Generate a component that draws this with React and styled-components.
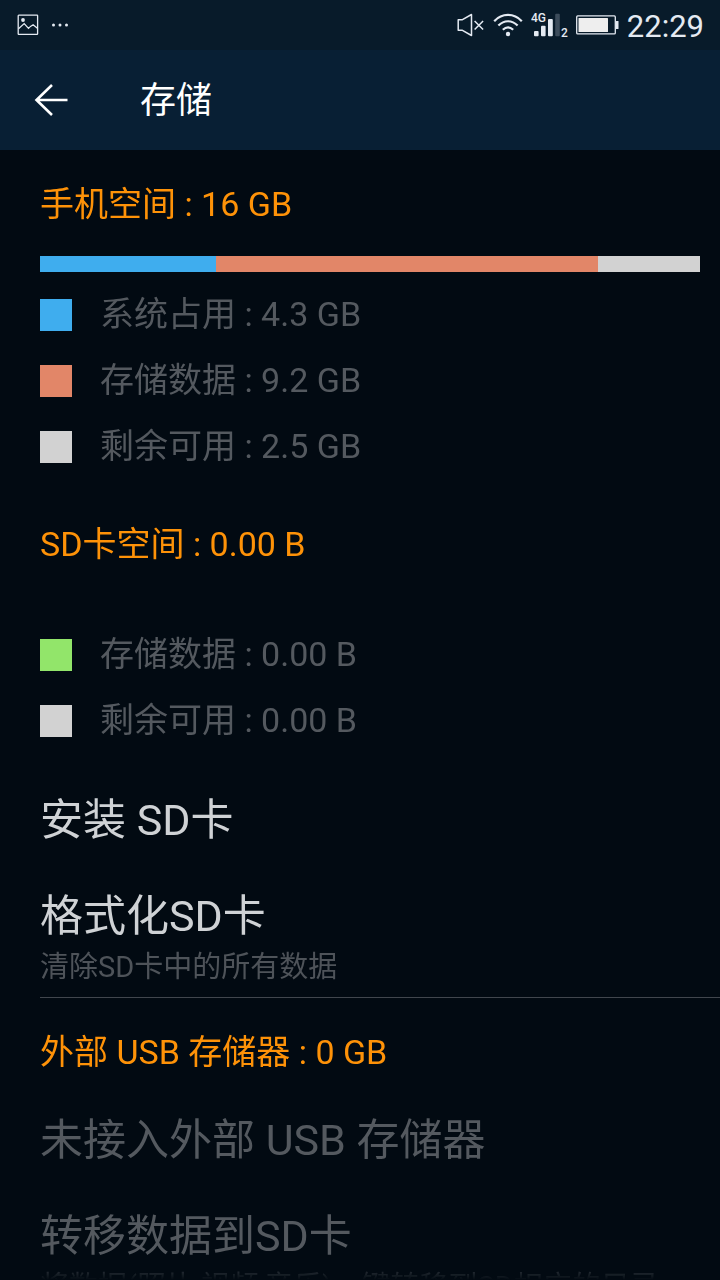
import React from 'react';
import styled, { createGlobalStyle } from 'styled-components';

const GlobalStyle = createGlobalStyle`
  * { box-sizing: border-box; }
  body {
    margin: 0;
    background: #020a12;
    font-family: Roboto, "Noto Sans CJK SC", sans-serif;
  }
`;

const Screen = styled.div`
  display: flex;
  flex-direction: column;
  height: 100vh;
  background: #020a12;
`;

const StatusBar = styled.div`
  flex: none;
  display: flex;
  align-items: center;
  justify-content: space-between;
  height: 50px;
  padding: 0 16px 0 17px;
  background: #081b2a;
  color: #e4eaf2;
`;

const StatusGroup = styled.div`
  display: flex;
  align-items: center;
  gap: ${(p) => p.$gap}px;
`;

const Clock = styled.time`
  font-size: 31px;
  line-height: 48px;
  padding-top: 4px;
`;

const AppBar = styled.header`
  flex: none;
  display: flex;
  align-items: center;
  gap: 72px;
  height: 100px;
  padding: 0 34px;
  background: #081f34;
`;

const BackButton = styled.button`
  display: flex;
  padding: 0;
  border: 0;
  background: none;
  color: #fff;
  cursor: pointer;
`;

const Title = styled.h1`
  margin: 0;
  padding-top: 2px;
  font-size: 36px;
  line-height: 44px;
  font-weight: 400;
  color: #fff;
`;

const Content = styled.main`
  flex: 1;
  min-height: 0;
  overflow-y: auto;
  scrollbar-width: none;
  mask-image: linear-gradient(to top, transparent, #000 20px);
`;

const Section = styled.section`
  padding: 34px 0 10px 40px;
`;

const SectionTitle = styled.h2`
  margin: 0;
  font-size: 34px;
  line-height: 40px;
  font-weight: 400;
  color: #fe9208;
`;

const UsageBar = styled.div`
  display: flex;
  height: 16px;
  margin: 32px 20px 10px 0;
`;

const UsagePart = styled.div`
  background: ${(p) => p.$color};
`;

const Legend = styled.ul`
  margin: 0;
  padding: 0;
  list-style: none;
`;

const LegendRow = styled.li`
  display: flex;
  align-items: center;
  gap: 28px;
  height: 66px;
  font-size: 34px;
  line-height: 40px;
  color: #54595f;
`;

const Swatch = styled.span`
  width: 32px;
  height: 32px;
  background: ${(p) => p.$color};
`;

const LegendText = styled.span`
  padding-bottom: 2px;
`;

const ActionList = styled.div`
  display: flex;
  flex-direction: column;
  padding-top: ${(p) => p.$top}px;
`;

const Action = styled.button`
  width: 100%;
  padding: 22px 0;
  border: 0;
  background: none;
  text-align: left;
  font-family: inherit;
  font-size: 43px;
  line-height: 52px;
  color: #cfd2d5;
  cursor: pointer;

  &:disabled {
    color: #54595f;
    cursor: default;
  }
`;

const ActionNote = styled.span`
  display: block;
  margin: 7px 0 -10px;
  font-size: 29px;
  line-height: 36px;
  color: #4e5359;
  white-space: nowrap;
`;

const Divider = styled.hr`
  height: 1px;
  margin: 0 0 0 40px;
  border: 0;
  background: #41464d;
`;

const Indented = styled.div`
  margin-top: -10px;
  padding-left: 40px;
`;

const BLUE = '#3fadee';
const CORAL = '#e28668';
const GREEN = '#92e56a';
const GRAY = '#d2d2d2';

const phoneUsage = [
  { label: '系统占用 : 4.3 GB', size: 4.27, color: BLUE },
  { label: '存储数据 : 9.2 GB', size: 9.25, color: CORAL },
  { label: '剩余可用 : 2.5 GB', size: 2.47, color: GRAY },
];

const cardUsage = [
  { label: '存储数据 : 0.00 B', size: 0, color: GREEN },
  { label: '剩余可用 : 0.00 B', size: 0, color: GRAY },
];

function Usage({ title, parts }) {
  return (
    <Section>
      <SectionTitle>{title}</SectionTitle>
      <UsageBar>
        {parts.map((p) => (
          <UsagePart key={p.label} $color={p.color} style={{ flexGrow: p.size }} />
        ))}
      </UsageBar>
      <Legend>
        {parts.map((p) => (
          <LegendRow key={p.label}>
            <Swatch $color={p.color} />
            <LegendText>{p.label}</LegendText>
          </LegendRow>
        ))}
      </Legend>
    </Section>
  );
}

const PictureIcon = () => (
  <svg width="22" height="22" viewBox="0 0 22 22" fill="none" stroke="currentColor" strokeWidth="1.3">
    <rect x="1.2" y="1.2" width="19.4" height="19.2" rx="0.6" />
    <circle cx="6" cy="6" r="1.9" fill="currentColor" stroke="none" />
    <path d="M1.5 14.8 7.2 9.6l4.3 4.8 2-2 2.6-1.6 4.6 3.8" />
  </svg>
);

const DotsIcon = () => (
  <svg width="18" height="4" viewBox="0 0 18 4" fill="currentColor">
    <circle cx="2.5" cy="2" r="1.5" />
    <circle cx="9" cy="2" r="1.5" />
    <circle cx="15.5" cy="2" r="1.5" />
  </svg>
);

const MuteIcon = () => (
  <svg width="28" height="24" viewBox="0 0 28 24" fill="none" stroke="currentColor" strokeWidth="1.5">
    <path d="M1.2 6.8H5L14.5 1.5v21L5 17.2H1.2z" strokeLinejoin="round" />
    <path d="m17.6 8 8.5 8.5M26.1 8 17.6 16.5" />
  </svg>
);

const WifiIcon = () => (
  <svg width="30" height="24" viewBox="0 0 30 24" fill="none" stroke="currentColor" strokeWidth="2.2">
    <path d="M1.2 8.2C9-.2 21-.2 28.8 8.2M5.4 12.6c5.6-5.8 13.6-5.8 19.2 0M9.8 16.8c3.2-3 7.2-3 10.4 0" />
    <circle cx="15" cy="21" r="2.2" fill="currentColor" stroke="none" />
  </svg>
);

const SignalIcon = () => (
  <svg width="37" height="28" viewBox="0 0 37 28" fill="currentColor">
    <rect x="3" y="20" width="4.6" height="5.2" rx="1" />
    <rect x="10" y="14.8" width="4.6" height="10.4" rx="1" />
    <rect x="17" y="8" width="4.8" height="17.2" rx="1" />
    <rect x="24.2" y="2.8" width="4.6" height="22.4" rx="1" fill="#3c4c5b" />
    <text x="0" y="11" fontSize="12" fontWeight="500" fontFamily="Roboto, sans-serif">4G</text>
    <text x="30" y="26" fontSize="12" fontWeight="500" fontFamily="Roboto, sans-serif">2</text>
  </svg>
);

const BatteryIcon = () => (
  <svg width="43" height="20" viewBox="0 0 43 20" fill="none">
    <rect x="0.7" y="0.9" width="38.6" height="18" rx="1" stroke="currentColor" strokeWidth="1.3" />
    <rect x="2.5" y="3" width="29.5" height="14" rx="0.5" fill="#eeeeee" />
    <rect x="39.8" y="6" width="2.7" height="8" rx="0.5" fill="currentColor" />
  </svg>
);

const BackIcon = () => (
  <svg width="34" height="34" viewBox="0 0 34 34" fill="none" stroke="currentColor" strokeWidth="2.6">
    <path d="M33.5 17H2.5M18 2 2.5 17 18 32" />
  </svg>
);

export default function App() {
  return (
    <>
      <GlobalStyle />
      <Screen>
        <StatusBar>
          <StatusGroup $gap={12}>
            <PictureIcon />
            <DotsIcon />
          </StatusGroup>
          <StatusGroup $gap={8}>
            <MuteIcon />
            <WifiIcon />
            <SignalIcon />
            <BatteryIcon />
            <Clock>22:29</Clock>
          </StatusGroup>
        </StatusBar>
        <AppBar>
          <BackButton type="button" aria-label="返回">
            <BackIcon />
          </BackButton>
          <Title>存储</Title>
        </AppBar>
        <Content>
          <Usage title="手机空间 : 16 GB" parts={phoneUsage} />
          <Usage title="SD卡空间 : 0.00 B" parts={cardUsage} />
          <Indented>
            <ActionList $top={18}>
              <Action type="button">安装 SD卡</Action>
              <Action type="button">
                格式化SD卡
                <ActionNote>清除SD卡中的所有数据</ActionNote>
              </Action>
            </ActionList>
          </Indented>
          <Divider />
          <Section>
            <SectionTitle>外部 USB 存储器 : 0 GB</SectionTitle>
          </Section>
          <Indented>
            <ActionList $top={20}>
              <Action type="button" disabled>未接入外部 USB 存储器</Action>
              <Action type="button" disabled>
                转移数据到SD卡
                <ActionNote>将数据(照片,视频,音乐)一键转移到SD相应的目录</ActionNote>
              </Action>
            </ActionList>
          </Indented>
        </Content>
      </Screen>
    </>
  );
}
